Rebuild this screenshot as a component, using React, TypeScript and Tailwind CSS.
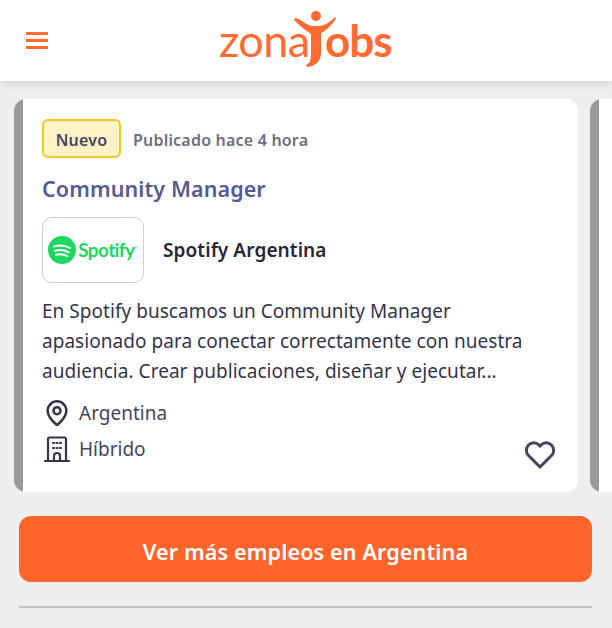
import { MapPin } from 'lucide-react';

const font = { fontFamily: '"Noto Sans", sans-serif' };

function Logo() {
  return (
    <svg width="176" height="60" viewBox="0 0 176 60" fill="#ff6a33" className="block">
      <text x="-1" y="49" fontFamily="Lato, sans-serif" fontSize="45" letterSpacing="-0.6">zona</text>
      <text x="105" y="49" fontFamily="Lato, sans-serif" fontWeight="700" fontSize="44" letterSpacing="-1">obs</text>
      <circle cx="96" cy="8" r="5" />
      <path d="M75 10c6 1 11 7 17 8h8c6-1 11-5 15-9l1 1c-3 6-9 12-15 15v20c0 9-6 13-14 14l-1-2c4-2 5-5 5-11V26c-6-4-12-9-17-14z" />
    </svg>
  );
}

function SpotifyLogo() {
  return (
    <div className="flex items-center gap-[2px]">
      <svg width="28" height="28" viewBox="0 0 28 28" className="shrink-0">
        <circle cx="14" cy="14" r="14" fill="#1ed760" />
        <path d="M6 10.5c5-1.500 11-1 16 1.600M7 14.800c4.500-1.200 9.500-.8 13.500 1.500M8 18.800c3.800-1 7.800-.6 11 1.200" fill="none" stroke="#fff" strokeWidth="2" strokeLinecap="round" />
      </svg>
      <span className="text-[19px] font-bold tracking-[-0.6px] text-[#1ed760]" style={{ fontFamily: 'Lato, sans-serif' }}>Spotify</span>
      <span className="mb-[4px] ml-[-2px] text-[4px] text-[#1ed760]">®</span>
    </div>
  );
}

function BuildingIcon() {
  return (
    <svg width="26" height="26" viewBox="0 0 26 26" fill="none" stroke="#33344d" strokeWidth="2.200">
      <path d="M1 25h24" strokeLinecap="round" />
      <path d="M4 25V3a1.500 1.500 0 0 1 1.500-1.500h15A1.500 1.500 0 0 1 22 3v22" />
      <path d="M10 25v-5a3 3 0 0 1 6 0v5" />
      <path d="M9 7h1M12.500 7h1M16 7h1M9 12h1M12.500 12h1M16 12h1" strokeLinecap="round" />
    </svg>
  );
}

function HeartIcon() {
  return (
    <svg width="32" height="28" viewBox="0 0 32 28" fill="none" stroke="#44455f" strokeWidth="3" strokeLinejoin="round">
      <path d="M16 26 4.500 14.500a7.500 7.500 0 0 1 0-10.500 7.500 7.500 0 0 1 10.500 0l1 1.200 1-1.200a7.500 7.500 0 0 1 10.500 0 7.500 7.500 0 0 1 0 10.500z" />
    </svg>
  );
}

export default function App() {
  return (
    <div className="h-[628px] w-[612px] overflow-hidden bg-[#eeeeee]" style={font}>
      <header className="flex h-[81px] items-center bg-white pl-[26px] shadow-[0_2px_10px_rgba(0,0,0,0.12)]">
        <div className="flex w-[22px] flex-col gap-[4.500px]">
          <span className="h-[2.500px] bg-[#ff6a33]" />
          <span className="h-[2.500px] bg-[#ff6a33]" />
          <span className="h-[2.500px] bg-[#ff6a33]" />
        </div>
        <div className="ml-[172px] mt-[-5px]">
          <Logo />
        </div>
      </header>

      <div className="mt-[18px] flex gap-3 overflow-hidden pl-[14px]">
        <article className="flex h-[393px] w-[564px] shrink-0 overflow-hidden rounded-[12px] bg-white">
          <div className="w-[8.500px] shrink-0 bg-[#999999]" />
          <div className="flex min-w-0 flex-1 flex-col pl-[19.500px] pr-[20px] pt-[20px]">
            <div className="flex items-center gap-[12px]">
              <span className="flex h-[39px] w-[79px] items-center justify-center rounded-[6px] border-2 border-[#f7c61f] bg-[#fff2c4] pt-[3px] text-[16px] font-semibold tracking-[0.2px] text-[#44455f]">Nuevo</span>
              <span className="pt-[3px] text-[16px] font-semibold tracking-[0.2px] text-[#6d6e82]">Publicado hace 4 hora</span>
            </div>
            <h2 className="mt-[16px] text-[21.500px] font-semibold leading-[29px] tracking-[0.1px] text-[#565a92]">Community Manager</h2>
            <div className="mt-[14px] flex items-center gap-[19px]">
              <div className="flex h-[66px] w-[102px] items-center justify-center rounded-[10px] border border-[#c5cde3]">
                <SpotifyLogo />
              </div>
              <span className="text-[19px] font-semibold tracking-[0.1px] text-[#25263b]">Spotify Argentina</span>
            </div>
            <p className="mt-[13px] w-[500px] text-[19px] leading-[30px] tracking-[0.04px] text-[#33344d]">
              En Spotify buscamos un Community Manager apasionado para conectar correctamente con nuestra audiencia. Crear publicaciones, diseñar y ejecutar...
            </p>
            <div className="mt-[9px] flex items-center text-[19px] leading-[36px] text-[#44455f]">
              <span className="w-[37px] pl-[1px]">
                <MapPin size={28} strokeWidth={2.2} color="#33344d" />
              </span>
              <span>Argentina</span>
            </div>
            <div className="flex items-end justify-between pr-[2px]">
              <div className="flex items-center text-[19px] leading-[36px] text-[#44455f]">
                <span className="w-[37px] pl-[2px]">
                  <BuildingIcon />
                </span>
                <span>Híbrido</span>
              </div>
              <span className="mb-[-2px]">
                <HeartIcon />
              </span>
            </div>
          </div>
        </article>
        <article className="flex h-[393px] w-[564px] shrink-0 overflow-hidden rounded-[12px] bg-white">
          <div className="w-[8.500px] shrink-0 bg-[#999999]" />
        </article>
      </div>

      <div className="mx-[19px] mt-[24px]">
        <button className="h-[66px] w-[573px] rounded-[12px] bg-[#ff642b] pt-[7px] text-[21.500px] font-semibold tracking-[0.15px] text-white">Ver más empleos en Argentina</button>
        <div className="mt-[24px] h-[1.500px] w-[573px] bg-[#c4c4c8]" />
      </div>
    </div>
  );
}
